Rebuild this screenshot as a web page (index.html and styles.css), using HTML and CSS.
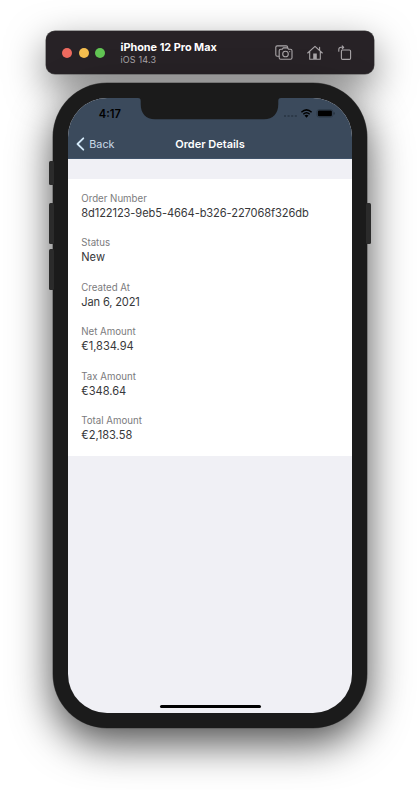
FILE: index.html
```html
<!DOCTYPE html>
<html lang="en">
<head>
<meta charset="utf-8">
<title>Order Details</title>
<link rel="stylesheet" href="styles.css">
</head>
<body>
<header class="toolbar">
  <div class="lights"><span class="light red"></span><span class="light yellow"></span><span class="light green"></span></div>
  <div class="device-info">
    <div class="device-name">iPhone 12 Pro Max</div>
    <div class="device-os">iOS 14.3</div>
  </div>
  <div class="tools">
    <svg width="18" height="16" viewBox="0 0 18 16"><path d="M3.8 11.2H2.2Q.8 11.2.8 9.800V2.300Q.8.900 2.200.900H11.200Q12.600.900 12.700 2.500"/><path d="M5.700 4.300H7.200L8.300 2.900H12.500L13.600 4.300H15.500Q17 4.300 17 5.800V12.700Q17 14.200 15.500 14.200H5.700Q4.200 14.200 4.200 12.700V5.800Q4.200 4.300 5.700 4.300Z"/><circle cx="10.500" cy="9" r="2.800"/><circle class="solid" cx="14.700" cy="6.600" r=".6"/></svg>
    <svg width="16" height="16" viewBox="0 0 16 16"><path d="M.7 8 8 1.300 15.300 8M2.700 6.700V14.200H13.300V6.700M12.600 5V2.200"/><path class="solid" d="M6.200 8.500H9.800V14H6.200Z"/></svg>
    <svg width="14" height="16" viewBox="0 0 14 16"><rect x="3.400" y="5" width="9.200" height="9.400" rx="1.200"/><path d="M.8 6.200V4.500Q.8 2.300 3 2.300H5.600M4.200.8 5.700 2.300 4.200 3.800"/></svg>
  </div>
</header>

<main class="phone">
  <span class="key mute"></span><span class="key up"></span><span class="key down"></span><span class="key power"></span>
  <section class="screen">
    <svg class="notch" width="143" height="22" viewBox="0 0 143 22"><path d="M0 0C2 0 2.700 1 2.700 3V6C2.700 15.500 8 21.200 17 21.200H126C135 21.200 140.300 15.500 140.300 6V3C140.300 1 141 0 143 0Z"/></svg>
    <div class="top">
      <div class="status">
        <span class="time">4:17</span>
        <svg class="signals" width="52" height="12" viewBox="0 0 52 12">
          <g class="dots"><rect x="1" y="7" width="2" height="2"/><rect x="4.600" y="7" width="2" height="2"/><rect x="8.200" y="7" width="2" height="2"/><rect x="11.800" y="7" width="2" height="2"/></g>
          <path class="wifi" d="M18.400 4.200Q23.500-.4 28.600 4.200M20.300 6.200Q23.500 3.400 26.700 6.200"/><path d="M21.500 7.500Q23.500 5.900 25.500 7.500L23.500 9.700Z"/>
          <rect class="battery" x="33.900" y="1.600" width="16" height="7.600" rx="2.200"/><rect x="34.900" y="2.500" width="14" height="5.800" rx="1.200"/><rect class="tip" x="50.600" y="4.200" width="1" height="2.400" rx=".5"/>
        </svg>
      </div>
      <nav class="nav">
        <a class="back"><svg width="9" height="14" viewBox="0 0 9 14"><path d="M7.300 1.300 1.500 7 7.300 12.700"/></svg><span>Back</span></a>
        <h1>Order Details</h1><span></span>
      </nav>
    </div>
    <dl class="details">
      <div class="field"><dt>Order Number</dt><dd class="order-id">8d122123-9eb5-4664-b326-227068f326db</dd></div>
      <div class="field"><dt>Status</dt><dd>New</dd></div>
      <div class="field"><dt>Created At</dt><dd class="date">Jan 6, 2021</dd></div>
      <div class="field"><dt>Net Amount</dt><dd>€1,834.94</dd></div>
      <div class="field"><dt>Tax Amount</dt><dd>€348.64</dd></div>
      <div class="field"><dt>Total Amount</dt><dd>€2,183.58</dd></div>
    </dl>
    <div class="home-indicator"></div>
  </section>
</main>
</body>
</html>
```
FILE: styles.css
```css
* { box-sizing: border-box; }
body { margin: 0; height: 790px; padding-top: 31px; background: #fff; font-family: Inter, "Liberation Sans", sans-serif; overflow: hidden; display: flex; flex-direction: column; align-items: center; }
.toolbar { width: 328px; height: 43px; flex: none; display: flex; align-items: center; padding: 0 22.500px 0 16px; background: #272226; border-radius: 9px; box-shadow: 0 0 0 .5px #555, 0 14px 38px rgba(0,0,0,.5); position: relative; }
.lights { display: flex; gap: 6.500px; }
.light { width: 10px; height: 10px; border-radius: 50%; }
.red { background: #ee6a5f; }
.yellow { background: #f5be4f; }
.green { background: #62c554; }
.device-info { margin-left: 15.500px; flex: 1; white-space: nowrap; }
.device-name { color: #fff; font-size: 10.850px; line-height: 13px; font-weight: 700; }
.device-os { color: #aaa6a9; font-size: 9px; line-height: 11px; letter-spacing: .15px; }
.tools { display: flex; align-items: center; gap: 14.500px; }
.tools svg { fill: none; stroke: #aaa6a9; stroke-width: 1.100; stroke-linecap: round; stroke-linejoin: round; }
.tools .solid { fill: #aaa6a9; stroke: none; }
.phone { width: 314.500px; height: 645px; flex: none; margin-top: 9px; padding: 15px; background: #1b1b1b; border-radius: 54px; box-shadow: 0 0 0 .5px #555, 0 15px 42px rgba(0,0,0,.7); position: relative; }
.key { position: absolute; width: 5px; height: 40.500px; left: -4px; background: #2b2b2b; border-radius: 1.500px; }
.mute { top: 78px; height: 23.500px; }
.up { top: 120px; }
.down { top: 166px; }
.power { top: 120px; left: auto; right: -4px; }
.screen { height: 100%; background: #f0f0f5; border-radius: 39px; overflow: hidden; position: relative; display: flex; flex-direction: column; }
.notch { position: absolute; top: 0; left: 70px; fill: #1b1b1b; }
.top { height: 60.500px; background: #3b4a5c; display: flex; flex-direction: column; border-bottom: 1px solid #40536a; }
.status { height: 31px; padding: 0 17px 0 31px; display: flex; justify-content: space-between; align-items: center; }
.time { margin-top: 2px; font-size: 11.200px; font-weight: 600; color: #000; }
.signals { margin-top: 2px; }
.dots { fill: #2c3948; }
.wifi { fill: none; stroke: #000; stroke-width: 1.500; }
.battery { fill: none; stroke: #2c3846; stroke-width: .8; }
.tip { fill: #202b37; }
.nav { height: 29px; padding: 2px 8px 0; display: grid; grid-template-columns: 1fr auto 1fr; align-items: center; }
.back { display: flex; align-items: center; gap: 4.500px; color: #cadbe9; font-size: 10.800px; }
.back svg { fill: none; stroke: #d3e8f8; stroke-width: 1.800; stroke-linecap: round; stroke-linejoin: round; }
.nav h1 { margin: 0; color: #fff; font-size: 11px; font-weight: 600; }
.details { margin: 20.500px 0 0; height: 277px; padding: 11.500px 13.500px; background: #fff; }
.field { height: 44.500px; }
dt { color: #7b7b7d; font-size: 9.700px; line-height: 15px; }
dd { margin: 0; color: #37373a; font-size: 11.100px; line-height: 15px; white-space: nowrap; }
.order-id { letter-spacing: -.09px; }
.date { letter-spacing: -.15px; }
.home-indicator { width: 101px; height: 3.500px; margin: auto auto 5px; border-radius: 2px; background: #000; }
```
